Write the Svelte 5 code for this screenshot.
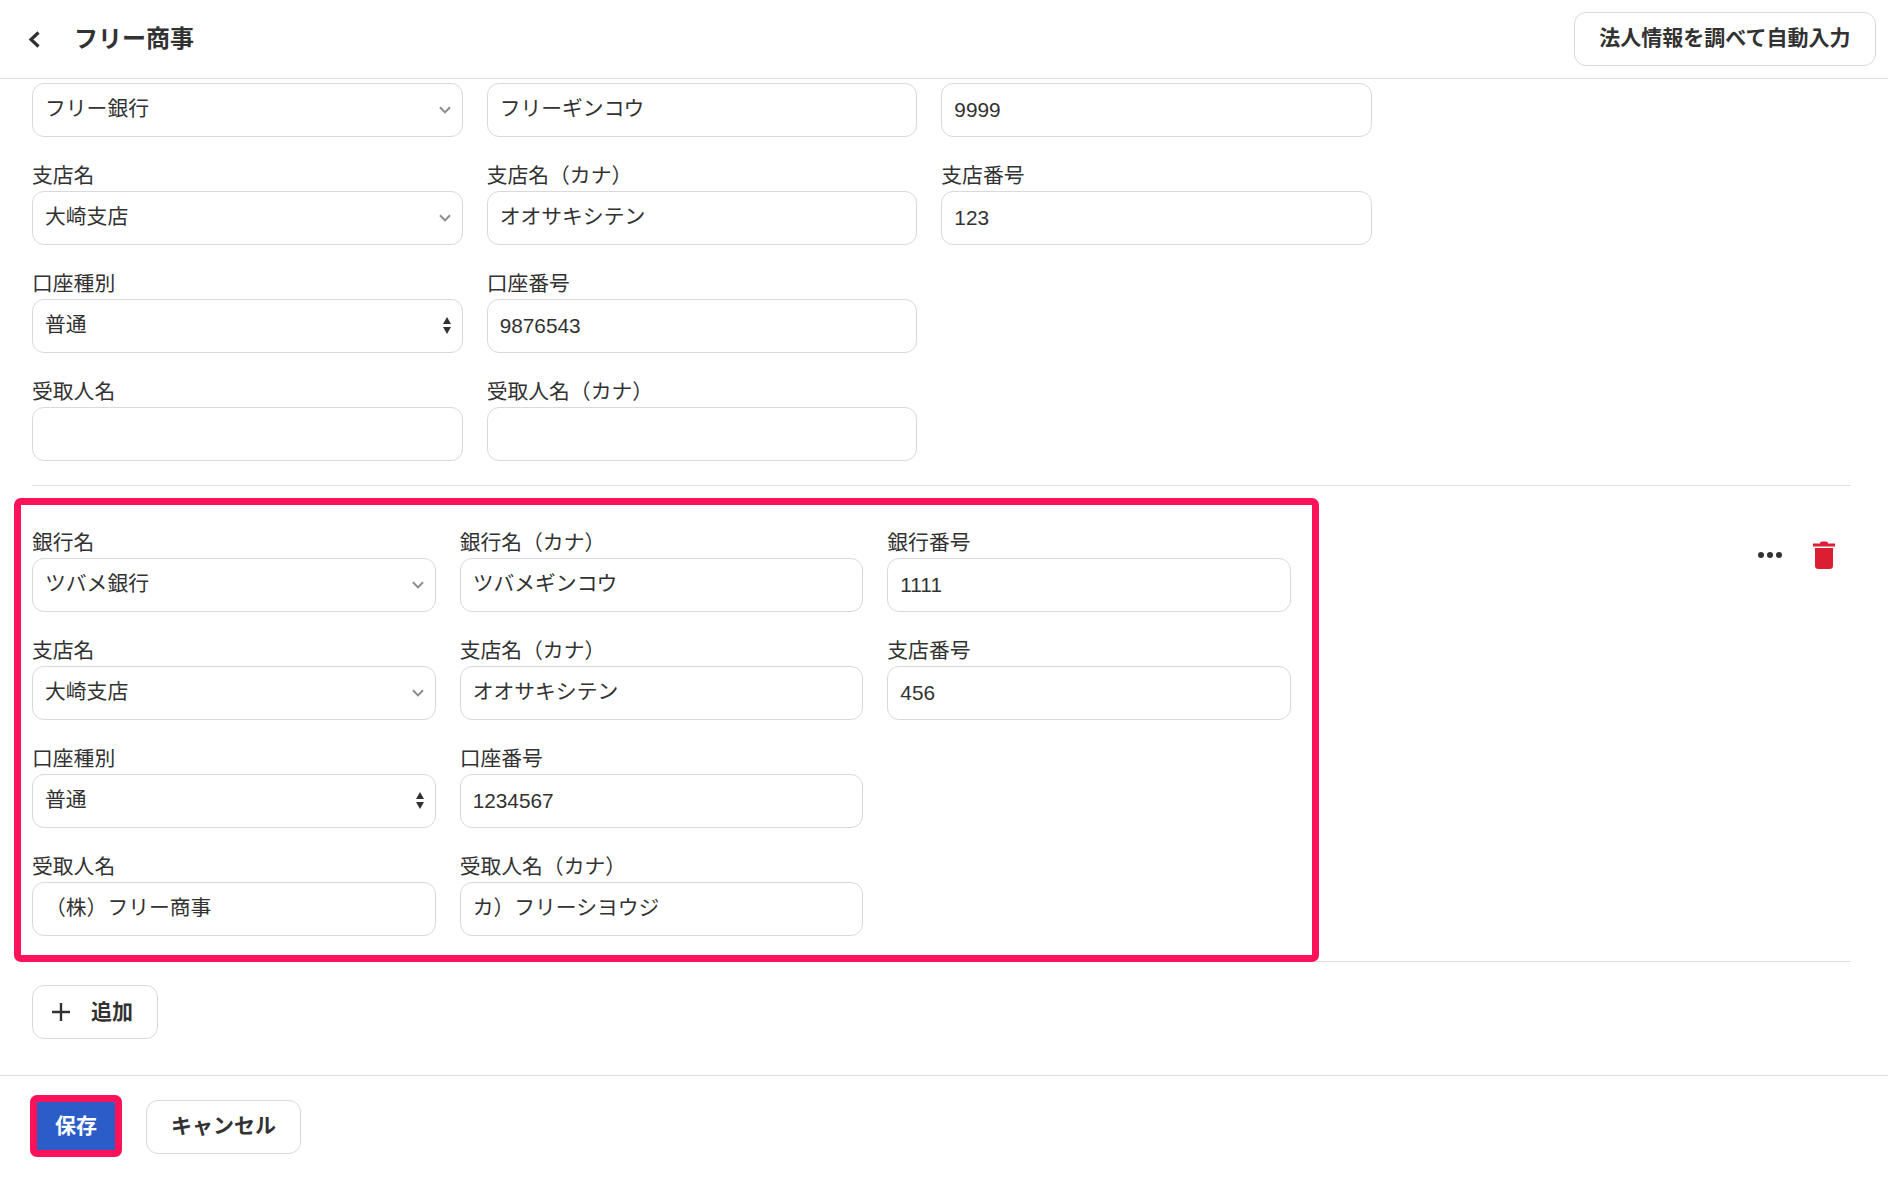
<script>
    const firstAccount = [
        [
            { value: 'フリー銀行', kind: 'combo' },
            { value: 'フリーギンコウ' },
            { value: '9999' }
        ],
        [
            { label: '支店名', value: '大崎支店', kind: 'combo' },
            { label: '支店名（カナ）', value: 'オオサキシテン' },
            { label: '支店番号', value: '123' }
        ],
        [
            { label: '口座種別', value: '普通', kind: 'select' },
            { label: '口座番号', value: '9876543' }
        ],
        [
            { label: '受取人名', value: '' },
            { label: '受取人名（カナ）', value: '' }
        ]
    ];

    const secondAccount = [
        [
            { label: '銀行名', value: 'ツバメ銀行', kind: 'combo' },
            { label: '銀行名（カナ）', value: 'ツバメギンコウ' },
            { label: '銀行番号', value: '1111' }
        ],
        [
            { label: '支店名', value: '大崎支店', kind: 'combo' },
            { label: '支店名（カナ）', value: 'オオサキシテン' },
            { label: '支店番号', value: '456' }
        ],
        [
            { label: '口座種別', value: '普通', kind: 'select' },
            { label: '口座番号', value: '1234567' }
        ],
        [
            { label: '受取人名', value: '（株）フリー商事' },
            { label: '受取人名（カナ）', value: 'カ）フリーシヨウジ' }
        ]
    ];

    // Japanese text sits lower than digits in the fallback font, so it gets nudged up
    const isJapanese = (text) => /[^\x00-\x7f]/.test(text);
</script>

{#snippet field(item)}
    <div class="field">
        {#if item.label}
            <div class="label">{item.label}</div>
        {/if}
        <div class="control">
            <input type="text" class:ja={isJapanese(item.value)} value={item.value} />
            {#if item.kind === 'combo'}
                <svg class="chevron" width="12" height="8" viewBox="0 0 12 8">
                    <path d="M1 1.2 L6 6.4 L11 1.2" fill="none" stroke="#8c8c8c" stroke-width="2" />
                </svg>
            {:else if item.kind === 'select'}
                <svg class="updown" width="8" height="17" viewBox="0 0 8 17">
                    <path d="M4 0 L8 7 L0 7 Z M0 10 L8 10 L4 17 Z" fill="#323232" />
                </svg>
            {/if}
        </div>
    </div>
{/snippet}

<header class="header">
    <div class="title-wrap">
        <svg class="back" width="12" height="17" viewBox="0 0 12 17">
            <path d="M10.5 1.5 L3 8.5 L10.5 15.5" fill="none" stroke="#323232" stroke-width="3.2" />
        </svg>
        <h1>フリー商事</h1>
    </div>
    <button class="btn">法人情報を調べて自動入力</button>
</header>

<main class="content">
    <section class="account first">
        {#each firstAccount as row}
            <div class="row">
                {#each row as item}
                    {@render field(item)}
                {/each}
            </div>
        {/each}
    </section>

    <section class="account second">
        <div class="annotation"></div>
        <div class="rows">
            {#each secondAccount as row}
                <div class="row">
                    {#each row as item}
                        {@render field(item)}
                    {/each}
                </div>
            {/each}
        </div>
        <div class="actions">
            <svg width="24" height="6" viewBox="0 0 24 6" fill="#323232">
                <circle cx="3" cy="3" r="3" />
                <circle cx="12" cy="3" r="3" />
                <circle cx="21" cy="3" r="3" />
            </svg>
            <svg width="22" height="28" viewBox="0 0 22 28" fill="#dc1e32">
                <path d="M7 2.5 Q7 0.5 9 0.5 H13 Q15 0.5 15 2.5 H22 V5.5 H0 V2.5 Z" />
                <path d="M2 7 H20 V24.5 Q20 28 16.5 28 H5.5 Q2 28 2 24.5 Z" />
            </svg>
        </div>
    </section>

    <button class="btn add">
        <svg width="18" height="18" viewBox="0 0 18 18">
            <path d="M9 0 V18 M0 9 H18" stroke="#323232" stroke-width="2.4" />
        </svg>
        追加
    </button>
</main>

<footer class="footer">
    <div class="save-wrap">
        <button class="btn primary">保存</button>
        <div class="annotation"></div>
    </div>
    <button class="btn">キャンセル</button>
</footer>

<style>
    :global(body) {
        background: #fff;
        color: #323232;
        font-family: "Liberation Sans", "Noto Sans CJK JP", sans-serif;
        font-size: 20.8px;
    }

    .header {
        height: 78px;
        box-sizing: content-box;
        display: flex;
        align-items: center;
        justify-content: space-between;
        padding: 0 12.5px 0 28px;
        border-bottom: 1px solid #e0e0e0;
    }

    .title-wrap {
        display: flex;
        align-items: center;
        gap: 34px;
    }

    h1 {
        margin: 0 0 5px;
        font-size: 24px;
        font-weight: 700;
    }

    .btn {
        height: 53.33px;
        padding: 0 24px 5px;
        box-sizing: border-box;
        background: #fff;
        border: 1px solid #d9d9d9;
        border-radius: 12px;
        color: #323232;
        font: inherit;
        font-size: 21px;
        font-weight: 700;
    }

    .content {
        padding: 4px 37px 36px 32px;
    }

    .account {
        border-bottom: 1px solid #e0e0e0;
    }

    .first {
        padding-bottom: 24px;
    }

    .first .field {
        width: 430.67px;
    }

    .second {
        position: relative;
        display: flex;
        justify-content: space-between;
        padding-top: 43.67px;
        padding-bottom: 25px;
    }

    .second .field {
        width: 403.67px;
    }

    .row {
        display: flex;
        align-items: flex-end;
        gap: 24px;
    }

    .row + .row {
        margin-top: 25.5px;
    }

    .label {
        height: 29px;
        line-height: 27px;
    }

    .control {
        height: 53.5px;
        box-sizing: border-box;
        display: flex;
        align-items: center;
        padding: 0 10.67px 0 12px;
        background: #fff;
        border: 1px solid #d9d9d9;
        border-radius: 12px;
    }

    input {
        flex: 1;
        min-width: 0;
        padding: 0;
        border: none;
        outline: none;
        background: transparent;
        color: #323232;
        font: inherit;
    }

    input.ja {
        padding-bottom: 5px;
    }

    .actions {
        display: flex;
        align-items: center;
        gap: 31px;
        height: 28px;
        margin-top: 11.83px;
        padding-right: 16px;
    }

    .annotation {
        position: absolute;
        box-sizing: border-box;
        border: 7px solid #ff1259;
        border-radius: 7px;
        pointer-events: none;
    }

    .second .annotation {
        left: -18px;
        top: 12.5px;
        width: 1305px;
        height: 464px;
    }

    .add {
        display: flex;
        align-items: center;
        gap: 21px;
        width: 126px;
        margin-top: 23.67px;
        padding: 0 0 4px 19px;
    }

    .add svg {
        margin-top: 4px;
    }

    .footer {
        display: flex;
        gap: 26px;
        padding: 24.67px 32px;
        border-top: 1px solid #e0e0e0;
    }

    .save-wrap {
        position: relative;
    }

    .save-wrap .annotation {
        inset: -5px -2px -3px -2px;
    }

    .primary {
        width: 88px;
        padding: 0 0 5px;
        background: #2b5cc8;
        border-color: #2b5cc8;
        color: #fff;
    }
</style>
